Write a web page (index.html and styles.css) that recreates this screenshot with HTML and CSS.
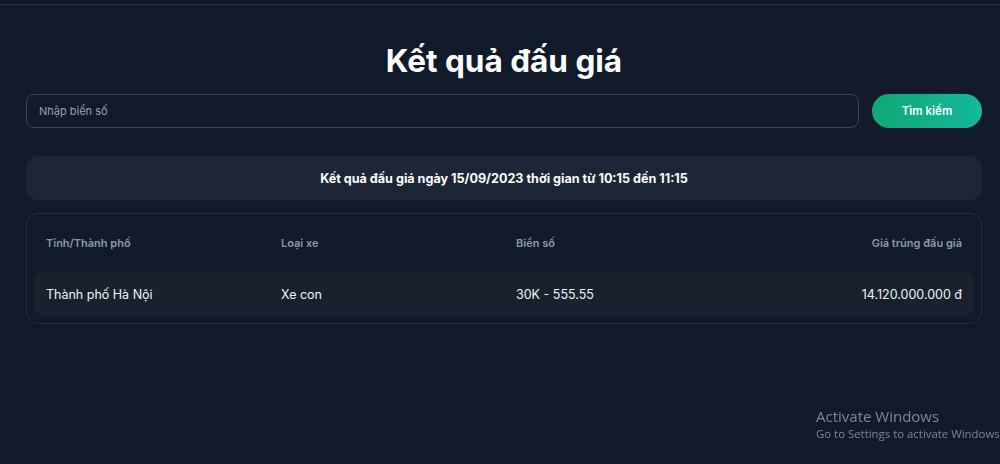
FILE: index.html
```html
<!DOCTYPE html>
<html lang="vi">
<head>
<meta charset="utf-8">
<title>Kết quả đấu giá</title>
<link rel="stylesheet" href="styles.css">
</head>
<body>
<div class="topbar"></div>
<main class="container">
  <h1 class="title">Kết quả đấu giá</h1>
  <form class="search">
    <input class="search-input" type="text" placeholder="Nhập biển số">
    <button class="search-btn" type="button">Tìm kiếm</button>
  </form>
  <div class="info">Kết quả đấu giá ngày 15/09/2023 thời gian từ 10:15 đến 11:15</div>
  <div class="card">
    <div class="row head">
      <div class="cell">Tỉnh/Thành phố</div>
      <div class="cell">Loại xe</div>
      <div class="cell">Biển số</div>
      <div class="cell right">Giá trúng đấu giá</div>
    </div>
    <div class="row data">
      <div class="cell">Thành phố Hà Nội</div>
      <div class="cell">Xe con</div>
      <div class="cell">30K - 555.55</div>
      <div class="cell right">14.120.000.000 đ</div>
    </div>
  </div>
</main>
<div class="watermark">
  <div class="wm-title">Activate Windows</div>
  <div class="wm-sub">Go to Settings to activate Windows</div>
</div>
</body>
</html>
```

FILE: styles.css
```css
html, body {
  margin: 0;
  padding: 0;
  background: #101a2a;
  font-family: Inter, "Noto Sans", sans-serif;
  color: #f1f5f9;
  height: 100%;
  overflow: hidden;
}

.topbar {
  height: 4px;
  border-bottom: 1px solid #2c3645;
  background: #0f1828;
}

.container {
  width: 956px;
  margin-left: 26px;
  padding-top: 38px;
}

.title {
  margin: 0;
  text-align: center;
  font-size: 31.5px;
  line-height: 36px;
  font-weight: 700;
  color: #ffffff;
}

.search {
  display: flex;
  gap: 13px;
  margin-top: 15px;
}

.search-input {
  flex: 1;
  height: 34px;
  box-sizing: border-box;
  border: 1px solid #3a4554;
  border-radius: 8px;
  background: #101a2a;
  padding: 0 12px;
  font-family: inherit;
  font-size: 11px;
  color: #e5e7eb;
  outline: none;
}

.search-input::placeholder {
  color: #9aa3af;
}

.search-btn {
  width: 110px;
  height: 34px;
  border: none;
  border-radius: 17px;
  background: linear-gradient(90deg, #0fa875 0%, #14b89b 100%);
  color: #ffffff;
  font-family: inherit;
  font-size: 11.5px;
  font-weight: 600;
}

.info {
  margin-top: 28px;
  height: 44px;
  display: flex;
  align-items: center;
  justify-content: center;
  background: #1c2637;
  border-radius: 12px;
  font-size: 12.6px;
  font-weight: 700;
  color: #ffffff;
}

.card {
  margin-top: 13px;
  border: 1px solid #232e3e;
  border-radius: 12px;
  padding: 7px;
}

.row {
  display: grid;
  grid-template-columns: repeat(4, 1fr);
  align-items: center;
  height: 44px;
}

.row.head {
  margin-bottom: 7px;
  font-size: 11px;
  font-weight: 600;
  color: #8c99ac;
}

.row.data {
  background: #18222f;
  border-radius: 10px;
  font-size: 12.5px;
  color: #f3f4f6;
}

.cell {
  padding: 0 12px;
}

.cell.right {
  text-align: right;
}

.watermark {
  position: fixed;
  left: 816px;
  top: 406px;
  font-family: "Open Sans", "Noto Sans", sans-serif;
  color: #7f8795;
  white-space: nowrap;
}

.wm-title {
  font-size: 15px;
  line-height: 20px;
}

.wm-sub {
  font-size: 11.4px;
  line-height: 16px;
}
```
